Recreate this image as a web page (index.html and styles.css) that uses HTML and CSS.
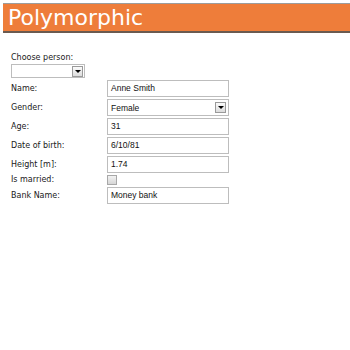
FILE: index.html
```html
<!DOCTYPE html>
<html>
<head>
<meta charset="utf-8">
<link rel="stylesheet" href="styles.css">
</head>
<body>
<header class="banner"><h1 class="title">Polymorphic</h1></header>
<form class="form">
  <div class="chooser">
    <label class="label">Choose person:</label>
    <div class="combo combo-small"><span class="combo-text"></span><span class="drop"><span class="tri"></span></span></div>
  </div>
  <div class="row"><span class="label">Name:</span><div class="field">Anne Smith</div></div>
  <div class="row"><span class="label">Gender:</span><div class="combo"><span class="combo-text">Female</span><span class="drop"><span class="tri"></span></span></div></div>
  <div class="row"><span class="label">Age:</span><div class="field">31</div></div>
  <div class="row"><span class="label">Date of birth:</span><div class="field">6/10/81</div></div>
  <div class="row"><span class="label">Height [m]:</span><div class="field">1.74</div></div>
  <div class="row row-check"><span class="label">Is married:</span><span class="check"></span></div>
  <div class="row"><span class="label">Bank Name:</span><div class="field">Money bank</div></div>
</form>
</body>
</html>
```
FILE: styles.css
```css
html, body {
  margin: 0;
  padding: 0;
  background: #fff;
}
body {
  font-family: "DejaVu Sans", Verdana, sans-serif;
  color: #1a1a1a;
}
.banner {
  margin: 3px 0 0 3px;
  height: 27px;
  background: #ee7d3a;
  border-top: 1px solid #9c9c9c;
  border-bottom: 2px solid #6a5a50;
  display: flex;
  align-items: center;
}
.title {
  margin: 0 0 0 5px;
  font-family: "DejaVu Sans", Verdana, sans-serif;
  font-weight: normal;
  font-size: 22px;
  line-height: 27px;
  color: #fff;
}
.form {
  margin: 0;
  padding: 19px 0 0 11px;
}
.label {
  font-size: 8px;
  line-height: 10px;
  color: #1a1a1a;
}
.chooser {
  display: flex;
  flex-direction: column;
  align-items: flex-start;
}
.chooser .label {
  line-height: 11px;
}
.combo {
  box-sizing: border-box;
  height: 17px;
  border: 1px solid #bdbdbd;
  background: #fff;
  display: flex;
  align-items: center;
  padding: 0 2px 0 3px;
}
.combo-small {
  margin-top: 1px;
  width: 74px;
  height: 14px;
  padding-right: 1px;
}
.combo-text {
  flex: 1;
  font-family: "Liberation Sans", Arial, sans-serif;
  font-size: 8.5px;
  color: #111;
}
.drop {
  box-sizing: border-box;
  width: 11px;
  height: 11px;
  border: 1px solid #9a9a9a;
  background: linear-gradient(#fbfbfb, #dcdcdc);
  display: flex;
  align-items: center;
  justify-content: center;
}
.tri {
  width: 0;
  height: 0;
  border-left: 3px solid transparent;
  border-right: 3px solid transparent;
  border-top: 3px solid #000;
}
.row {
  display: grid;
  grid-template-columns: 96px 122px;
  align-items: center;
  height: 17px;
  margin-top: 2px;
}
.row-check {
  height: 10px;
}
.field {
  box-sizing: border-box;
  height: 17px;
  border: 1px solid #bdbdbd;
  padding: 0 3px;
  font-family: "Liberation Sans", Arial, sans-serif;
  font-size: 8.5px;
  line-height: 15px;
  color: #111;
}
.check {
  box-sizing: border-box;
  width: 10px;
  height: 10px;
  border: 1px solid #a8a8a8;
  background: linear-gradient(#f2f2f2, #d6d6d6);
}
```
